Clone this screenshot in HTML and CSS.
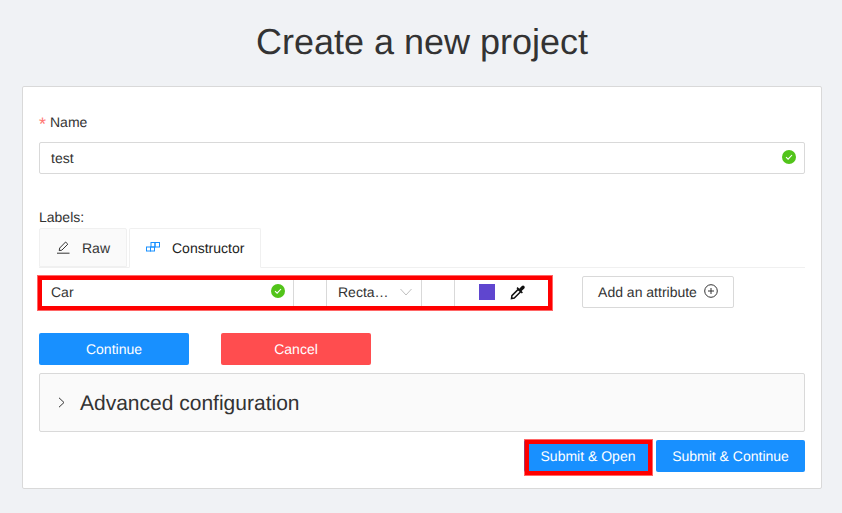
FILE: index.html
```html
<!DOCTYPE html>
<html lang="en">
<head>
<meta charset="utf-8">
<title>Create a new project</title>
<link rel="stylesheet" href="styles.css">
</head>
<body>
<h1 class="title">Create a new project</h1>
<main class="card">
  <div class="name-label"><span class="req">*</span>Name</div>
  <div class="field">
    <span class="input-text">test</span>
    <svg class="check check-name" viewBox="0 0 14 14"><circle cx="7" cy="7" r="7" fill="#52c41a"/><path d="M4 7.2l2.1 2L10 5" fill="none" stroke="#fff" stroke-width="1.1"/></svg>
  </div>
  <div class="labels-title">Labels:</div>
  <div class="tabs">
    <div class="tab tab-raw">
      <svg class="tab-icon-raw" viewBox="0 0 14 14"><path d="M1 13.2h12.500M3.200 10.600l.5-2.600L9.600 2l2.200 2.200-6 6z" fill="none" stroke="#333" stroke-width="1"/></svg>
      <span>Raw</span>
    </div>
    <div class="tab tab-active">
      <svg class="tab-icon-build" viewBox="0 0 14 10"><g fill="none" stroke="#1890ff" stroke-width="1"><rect x="0.5" y="5" width="4" height="4"/><rect x="4.5" y="5" width="4" height="4"/><rect x="5" y="0.5" width="4" height="4.5"/><rect x="9" y="0.5" width="4.500" height="4.500"/></g></svg>
      <span>Constructor</span>
    </div>
  </div>
  <div class="label-row">
    <div class="label-group">
      <div class="cell cell-name">
        <span>Car</span>
        <svg class="check" viewBox="0 0 14 14"><circle cx="7" cy="7" r="7" fill="#52c41a"/><path d="M4 7.2l2.1 2L10 5" fill="none" stroke="#fff" stroke-width="1.1"/></svg>
      </div>
      <div class="cell cell-gap"></div>
      <div class="cell cell-select">
        <span>Recta…</span>
        <svg class="chev" viewBox="0 0 12 8"><path d="M.5 1l5.500 6 5.500-6" fill="none" stroke="#bfbfbf" stroke-width="1"/></svg>
      </div>
      <div class="cell cell-gap"></div>
      <div class="cell cell-color">
        <span class="swatch"></span>
        <svg class="dropper" viewBox="0 0 16 16"><path d="M1.500 14.500l.4-2.800 6.300-6.300 2.400 2.400-6.300 6.300z" fill="#fff" stroke="#111" stroke-width="1.500"/><path d="M6.500 4.200l5.300 5.300 1.100-1.100-1.300-1.300 2.700-2.700a1.700 1.700 0 0 0-2.400-2.400L9.200 4.700 7.600 3.100z" fill="#111"/></svg>
      </div>
      <div class="hilite hilite-row"></div>
    </div>
    <div class="btn btn-default">Add an attribute
      <svg class="plus" viewBox="0 0 14 14"><circle cx="7" cy="7" r="6.300" fill="none" stroke="#333" stroke-width="1"/><path d="M7 4v6M4 7h6" stroke="#333" stroke-width="1"/></svg>
    </div>
  </div>
  <div class="actions">
    <div class="btn btn-primary btn-wide">Continue</div>
    <div class="btn btn-danger btn-wide">Cancel</div>
  </div>
  <div class="advanced">
    <svg class="adv-arrow" viewBox="0 0 7 11"><path d="M1 .8l5 4.700-5 4.700" fill="none" stroke="#333" stroke-width="1"/></svg>
    <span class="adv-text">Advanced configuration</span>
  </div>
  <div class="submit-row">
    <div class="btn btn-primary btn-open">Submit &amp; Open<div class="hilite hilite-open"></div></div>
    <div class="btn btn-primary btn-cont">Submit &amp; Continue</div>
  </div>
</main>
</body>
</html>
```

FILE: styles.css
```css
* { box-sizing: border-box; }
html, body { margin: 0; padding: 0; }
body {
  background: #f0f2f5;
  font-family: "Liberation Sans", Arial, sans-serif;
  font-size: 14px;
  line-height: 22px;
  color: #333;
  height: 513px;
  overflow: hidden;
  text-rendering: geometricPrecision;
}
.title {
  margin: 0;
  padding: 18px 0 0 2px;
  height: 86px;
  font-size: 36px;
  line-height: 48px;
  font-weight: 400;
  text-align: center;
}
.card {
  width: 800px;
  height: 403px;
  margin-left: 22px;
  padding: 16px;
  background: #fff;
  border: 1px solid #d9d9d9;
  border-radius: 2px;
}
.name-label { height: 39px; padding-top: 8px; display: flex; }
.req { color: #ff7875; width: 11px; font-size: 18px; padding-top: 2px; }
.field {
  height: 32px;
  border: 1px solid #d9d9d9;
  border-radius: 2px;
  padding: 4px 11px;
  display: flex;
  align-items: center;
  justify-content: space-between;
}
.input-text { line-height: 22px; }
.check { width: 14px; height: 14px; flex: none; }
.check-name { margin-right: -3px; margin-top: -2px; }
.labels-title { margin-top: 32px; height: 22px; }
.tabs {
  display: flex;
  gap: 2px;
  height: 40px;
  border-bottom: 1px solid #f0f0f0;
}
.tab {
  height: 40px;
  display: flex;
  align-items: center;
  border: 1px solid #f0f0f0;
  border-radius: 2px 2px 0 0;
  background: #fafafa;
}
.tab-raw { width: 88px; padding-left: 16px; gap: 12px; height: 39px; }
.tab-active {
  width: 132px;
  padding-left: 16px;
  gap: 12px;
  background: #fff;
  border-bottom-color: #fff;
  color: #222;
}
.tab-icon-raw { width: 14px; height: 14px; margin-top: -2px; }
.tab-icon-build { width: 14px; height: 10px; margin-top: -2px; }
.label-row {
  display: flex;
  margin-top: 8px;
  gap: 31px;
}
.label-group {
  position: relative;
  display: flex;
  width: 512px;
  height: 32px;
}
.cell {
  height: 32px;
  border: 1px solid #d9d9d9;
  border-left: 0;
  display: flex;
  align-items: center;
}
.cell-name {
  width: 255px;
  padding: 0 8px 0 12px;
  justify-content: space-between;
}
.cell-name .check { margin-top: -2px; }
.cell-gap { width: 33px; }
.cell-select {
  width: 95px;
  padding-left: 11px;
  gap: 11px;
}
.chev { width: 12px; height: 8px; }
.cell-color {
  flex: 1;
  padding-left: 24px;
  gap: 15px;
  border-right: 0;
}
.swatch { width: 16px; height: 16px; background: #5f46cf; }
.dropper { width: 16px; height: 16px; }
.hilite {
  position: absolute;
  border: 4px solid #ff0000;
  outline: 1px solid rgba(255, 0, 0, 0.6);
  pointer-events: none;
}
.hilite-row { left: -1px; top: 0; right: -1px; bottom: -2px; }
.btn {
  height: 32px;
  display: flex;
  align-items: center;
  justify-content: center;
  border-radius: 2px;
  border: 1px solid transparent;
  position: relative;
}
.btn-default {
  width: 152px;
  border-color: #d9d9d9;
  background: #fff;
  gap: 7px;
}
.plus { width: 14px; height: 14px; margin-top: -2px; }
.btn-primary { background: #1890ff; color: #fff; }
.btn-danger { background: #ff4d4f; color: #fff; }
.btn-wide { width: 150px; }
.actions {
  display: flex;
  gap: 32px;
  margin-top: 25px;
}
.advanced {
  display: flex;
  align-items: center;
  height: 59px;
  margin-top: 8px;
  padding-left: 18px;
  gap: 15px;
  background: #fafafa;
  border: 1px solid #d9d9d9;
  border-radius: 2px;
  font-size: 21px;
  line-height: 28px;
}
.adv-arrow { width: 7px; height: 11px; margin-top: -1px; }
.adv-text { padding-top: 2px; }
.submit-row {
  display: flex;
  justify-content: flex-end;
  gap: 4px;
  margin-top: 8px;
}
.btn-open { width: 128px; }
.btn-cont { width: 149px; }
.hilite-open { left: 0; top: -1px; right: -1px; bottom: -4px; }
```
